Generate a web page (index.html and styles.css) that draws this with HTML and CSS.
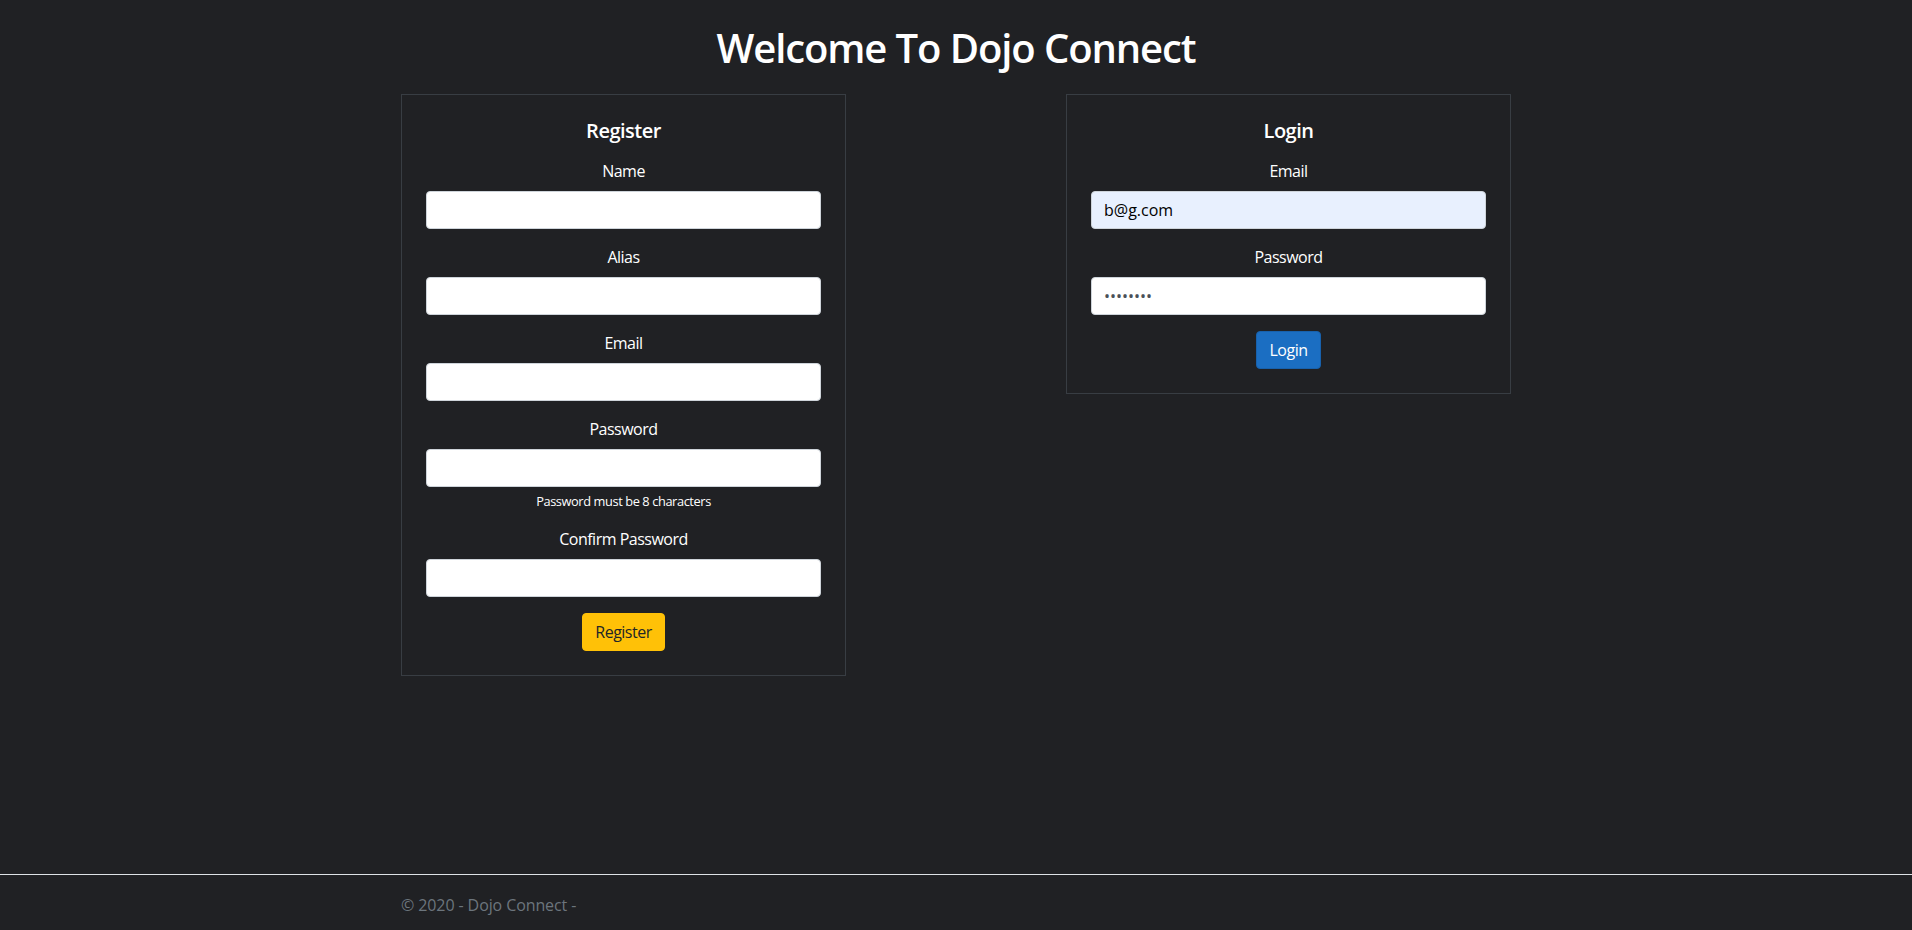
FILE: index.html
```html
<!DOCTYPE html>
<html lang="en">
    <head>
        <title>Dojo Connect</title>
        <meta charset="utf-8" name="viewport" content="width=device-width, initial-scale=1">
        <link rel="stylesheet" href="styles.css">
    </head>
    <body>
        <main class="container page">
            <h1 class="page-title">Welcome To Dojo Connect</h1>
            <div class="row">
                <form class="card">
                    <h5>Register</h5>
                    <div class="form-group">
                        <label for="name">Name</label>
                        <input type="text" id="name" class="form-control">
                    </div>
                    <div class="form-group">
                        <label for="alias">Alias</label>
                        <input type="text" id="alias" class="form-control">
                    </div>
                    <div class="form-group">
                        <label for="email">Email</label>
                        <input type="text" id="email" class="form-control">
                    </div>
                    <div class="form-group">
                        <label for="password">Password</label>
                        <input type="password" id="password" class="form-control">
                        <small class="form-text">Password must be 8 characters</small>
                    </div>
                    <div class="form-group">
                        <label for="confirm">Confirm Password</label>
                        <input type="password" id="confirm" class="form-control">
                    </div>
                    <button type="button" class="btn btn-warning">Register</button>
                </form>

                <form class="card">
                    <h5>Login</h5>
                    <div class="form-group">
                        <label for="loginEmail">Email</label>
                        <input type="text" id="loginEmail" class="form-control autofilled" value="b@g.com">
                    </div>
                    <div class="form-group">
                        <label for="loginPassword">Password</label>
                        <input type="password" id="loginPassword" class="form-control" value="password">
                    </div>
                    <button type="button" class="btn btn-primary">Login</button>
                </form>
            </div>
        </main>

        <footer class="footer">
            <div class="container">
                &copy; 2020 - Dojo Connect -
            </div>
        </footer>
    </body>
</html>
```

FILE: styles.css
```css
html{
    font-size: 16px;
}
body{
    margin: 0;
    min-height: 100vh;
    display: flex;
    flex-direction: column;
    background-color: #202124;
    color: #fff;
    font-family: "Open Sans", "Noto Sans", sans-serif;
    font-size: 16px;
    line-height: 1.5;
    letter-spacing: -0.5px;
}
.container{
    width: 1140px;
    margin: 0 auto;
    padding: 0 15px;
    box-sizing: border-box;
}
.page{
    flex: 1;
    padding-top: 24px;
}
.page-title{
    margin: 0 0 22px;
    font-size: 40px;
    line-height: 48px;
    font-weight: 600;
    letter-spacing: -1.1px;
    text-align: center;
}
.row{
    display: flex;
    justify-content: space-between;
    align-items: flex-start;
}
.card{
    width: 445px;
    box-sizing: border-box;
    border: 1px solid #383d43;
    padding: 24px;
    text-align: center;
}
.card h5{
    margin: 0 0 16px;
    font-size: 20px;
    line-height: 24px;
    font-weight: 600;
}
.form-group{
    margin-bottom: 16px;
}
.form-group label{
    display: inline-block;
    margin-bottom: 8px;
}
.form-control{
    display: block;
    width: 100%;
    height: 38px;
    box-sizing: border-box;
    padding: 6px 12px;
    border: 1px solid #ced4da;
    border-radius: 4px;
    background-color: #fff;
    color: #495057;
    font-family: inherit;
    font-size: 16px;
    line-height: 24px;
}
.form-control.autofilled{
    background-color: #e8f0fe;
    color: #000;
}
.form-text{
    display: block;
    margin-top: 4px;
    font-size: 12.8px;
    line-height: 20px;
    letter-spacing: -0.4px;
}
.btn{
    display: inline-block;
    padding: 6px 12px;
    border: 1px solid transparent;
    border-radius: 4px;
    font-family: inherit;
    font-size: 16px;
    line-height: 24px;
    letter-spacing: -0.5px;
    cursor: pointer;
}
.btn-warning{
    background-color: #ffc107;
    border-color: #ffc107;
    color: #212529;
}
.btn-primary{
    background-color: #1b6ec2;
    border-color: #1861ac;
    color: #fff;
}
.footer{
    border-top: 1px solid #dee2e6;
    padding: 18px 0 13px;
    line-height: 24px;
    color: #6c757d;
    letter-spacing: -0.1px;
    white-space: nowrap;
}
```
